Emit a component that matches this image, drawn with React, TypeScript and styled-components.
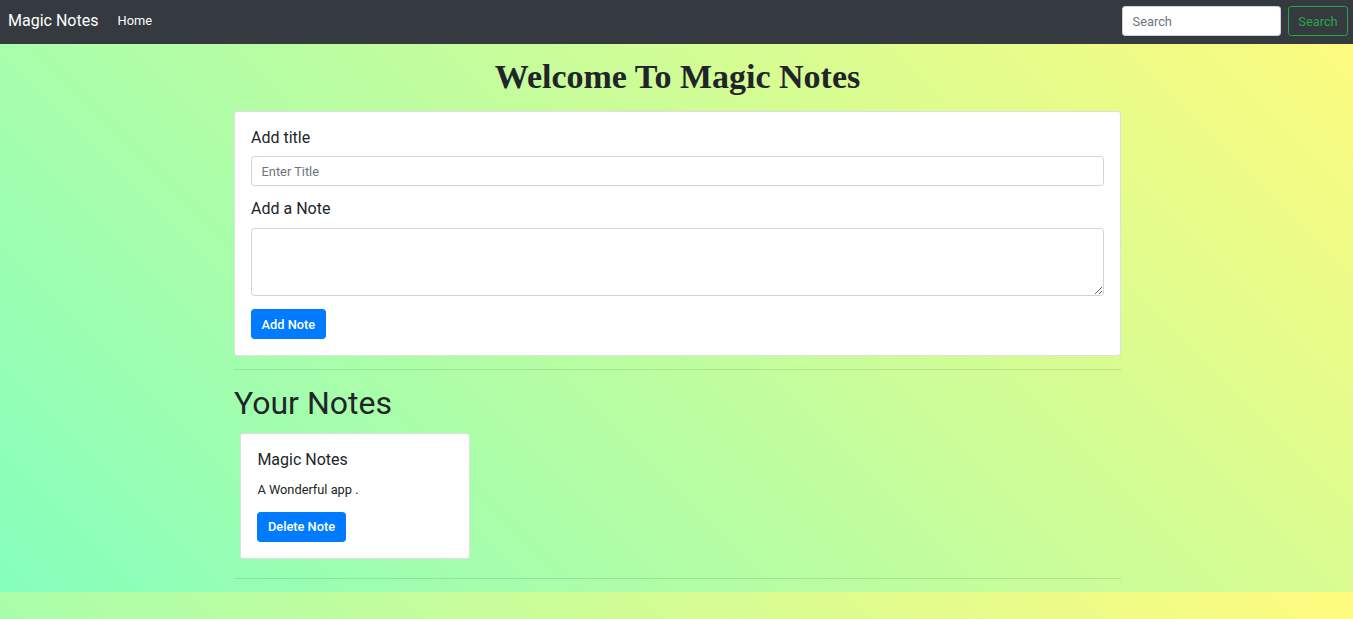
import React from "react";
import styled, { createGlobalStyle } from "styled-components";

const GlobalStyle = createGlobalStyle`
  html { margin: 0; }
  body {
    margin: 0;
    font-family: Roboto, "Liberation Sans", sans-serif;
    font-size: 12.8px;
    line-height: 1.5;
    color: #212529;
    background-image: linear-gradient(45deg, #85ffbd 0%, #fffb7d 100%);
  }
  * { box-sizing: border-box; }
`;

const NavBar = styled.nav`
  height: 44px;
  background: #343a40;
  display: flex;
  align-items: center;
  padding: 0 5px 2px 8px;
`;

const Brand = styled.a`
  font-size: 16px;
  color: #fff;
  text-decoration: none;
  margin-right: 12.8px;
  line-height: 1.5;
`;

const NavLink = styled.a`
  font-size: 12.8px;
  color: #fff;
  text-decoration: none;
  padding: 0 6.4px;
`;

const SearchForm = styled.form`
  margin-left: auto;
  display: flex;
  align-items: center;
  gap: 7px;
`;

const SearchInput = styled.input`
  width: 159px;
  height: 30px;
  padding: 4.8px 9.6px;
  font-family: inherit;
  font-size: 12.8px;
  color: #495057;
  background: #fff;
  border: 1px solid #ced4da;
  border-radius: 3.2px;
  outline: none;
  &::placeholder { color: #6c757d; }
`;

const OutlineButton = styled.button`
  height: 30px;
  width: 60px;
  padding: 0;
  font-family: inherit;
  font-size: 12.8px;
  color: #28a745;
  background: transparent;
  border: 1px solid #28a745;
  border-radius: 3.2px;
`;

const Container = styled.main`
  width: 912px;
  margin: 0 auto;
  padding: 0 11.5px 0 13.5px;
`;

const Welcome = styled.h1`
  margin: 14px 0 15px;
  height: 38px;
  line-height: 38px;
  text-align: center;
  font-family: "Liberation Serif", "DejaVu Serif", serif;
  font-weight: 700;
  font-size: 34px;
  color: #212529;
`;

const Card = styled.section<{ $width?: string; $inset?: boolean }>`
  width: ${(p) => p.$width ?? "auto"};
  margin: ${(p) => (p.$inset ? "5px 6.4px 6.4px 6.4px" : "0")};
  background: #fff;
  border: 1px solid rgba(0, 0, 0, 0.125);
  border-radius: 3.2px;
  padding: 16px;
  display: flex;
  flex-direction: column;
  align-items: flex-start;
`;

const Label = styled.h5<{ $gap: number }>`
  margin: 0 0 ${(p) => p.$gap}px;
  font-size: 16px;
  font-weight: 400;
  line-height: 19.2px;
  color: #212529;
`;

const TextInput = styled.input`
  width: 100%;
  height: 30px;
  padding: 4.8px 9.6px;
  font-family: inherit;
  font-size: 12.8px;
  color: #495057;
  border: 1px solid #ced4da;
  border-radius: 3.2px;
  margin-bottom: 13px;
  outline: none;
  &::placeholder { color: #6c757d; }
`;

const TextArea = styled.textarea`
  width: 100%;
  height: 68px;
  padding: 4.8px 9.6px;
  font-family: inherit;
  font-size: 12.8px;
  border: 1px solid #ced4da;
  border-radius: 3.2px;
  margin: 0 0 13px;
  resize: vertical;
  display: block;
  outline: none;
`;

const PrimaryButton = styled.button`
  height: 30px;
  padding: 0 9.6px;
  font-family: inherit;
  font-size: 12.8px;
  font-weight: 500;
  color: #fff;
  background: #007bff;
  border: 1px solid #007bff;
  border-radius: 3.2px;
`;

const Divider = styled.hr<{ $after?: number }>`
  margin: 13px 0 ${(p) => p.$after ?? 13}px;
  border: 0;
  border-top: 1px solid rgba(0, 0, 0, 0.1);
`;

const NotesHeading = styled.h1`
  margin: 0 0 6px;
  font-size: 32px;
  font-weight: 400;
  line-height: 38px;
  color: #212529;
`;

const NotesGrid = styled.div`
  display: flex;
  flex-wrap: wrap;
`;

const NoteText = styled.p`
  margin: 0 0 13px;
  font-size: 12.8px;
  line-height: 19.2px;
`;

export default function App() {
  return (
    <>
      <GlobalStyle />
      <NavBar>
        <Brand href="#">Magic Notes</Brand>
        <NavLink href="#">Home</NavLink>
        <SearchForm onSubmit={(e) => e.preventDefault()}>
          <SearchInput placeholder="Search" />
          <OutlineButton type="submit">Search</OutlineButton>
        </SearchForm>
      </NavBar>
      <Container>
        <Welcome>Welcome To Magic Notes</Welcome>
        <Card>
          <Label $gap={9}>Add title</Label>
          <TextInput placeholder="Enter Title" />
          <Label $gap={10}>Add a Note</Label>
          <TextArea />
          <PrimaryButton>Add Note</PrimaryButton>
        </Card>
        <Divider $after={14} />
        <NotesHeading>Your Notes</NotesHeading>
        <NotesGrid>
          <Card $width="230px" $inset>
            <Label $gap={10}>Magic Notes</Label>
            <NoteText>A Wonderful app .</NoteText>
            <PrimaryButton>Delete Note</PrimaryButton>
          </Card>
        </NotesGrid>
        <Divider />
      </Container>
    </>
  );
}
